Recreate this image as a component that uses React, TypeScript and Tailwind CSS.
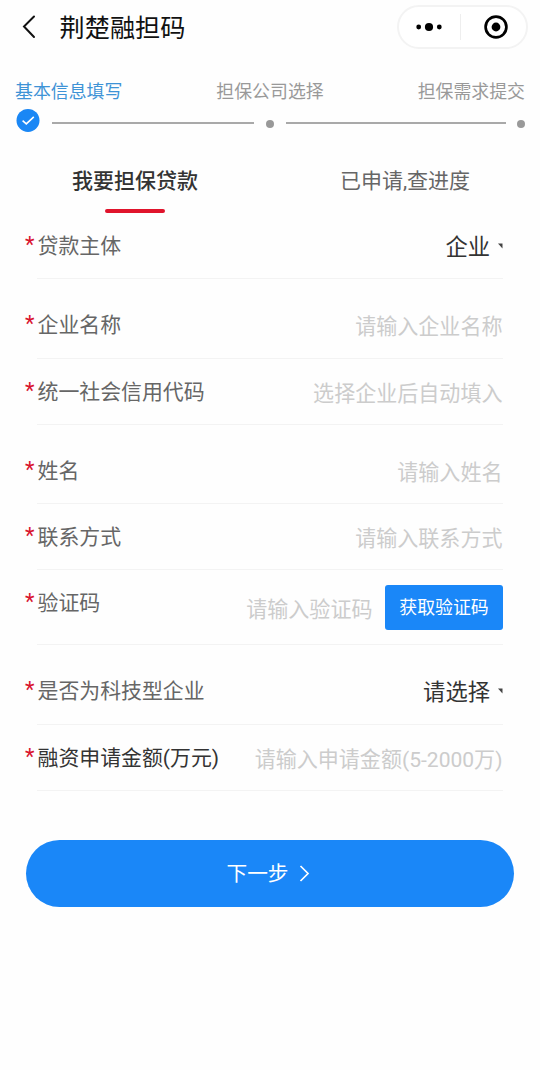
/**
 * 荆楚融担码 - 担保贷款申请表单
 */
import type { ReactNode } from "react";

interface FieldRowProps {
  label: string;
  dark?: boolean;
  className?: string;
  children: ReactNode;
}

/** 表单行 */
function FieldRow({ label, dark, className = "h-[66px]", children }: FieldRowProps) {
  return (
    <div className={`flex pl-[25px] pr-[37px] ${className}`}>
      <span className="w-[12px] shrink-0 pt-[16px] text-[22px] leading-[32px] text-[#d9152f]">*</span>
      <div className="flex flex-1 justify-between border-b border-[#f3f3f3]">
        <span
          className={`h-[64px] whitespace-nowrap pl-[0.5px] text-[20.9px] leading-[67px] ${dark ? "text-[#333333]" : "text-[#666666]"}`}
        >
          {label}
        </span>
        {children}
      </div>
    </div>
  );
}

/** 占位提示 */
function Hint({ text }: { text: string }) {
  return (
    <span className="h-[66px] whitespace-nowrap pr-[0.5px] text-[21.05px] leading-[69px] text-[#cccccc]">{text}</span>
  );
}

/** 下拉选择 */
function Picker({ text }: { text: string }) {
  return (
    <span className="flex h-[66px] items-center gap-[8px] text-[22.3px] leading-[68px] text-[#333333]">
      <span className="h-[66px]">{text}</span>
      <svg width="5" height="6" viewBox="0 0 5 6" className="block">
        <path d="M0 0.5H4.5V5.5Z" fill="#444444" />
      </svg>
    </span>
  );
}

export default function App() {
  return (
    <div className="h-[1070px] w-[540px] overflow-hidden bg-[#fefefe] font-['Roboto','Noto_Sans_CJK_SC',sans-serif]">
      {/* 顶部导航 */}
      <header className="flex h-[54px] items-center pl-[22px] pr-[12px]">
        <svg width="14" height="24" viewBox="0 0 14 24" fill="none" className="shrink-0">
          <path d="M12 1.5L2 11.5L12 22" stroke="#111111" strokeWidth="2" strokeLinecap="round" />
        </svg>
        <h1 className="ml-[23.5px] h-[54px] text-[25.2px] leading-[57px] text-[#111111]">荆楚融担码</h1>
        <div className="ml-auto flex h-[44px] w-[131px] items-center rounded-full border-2 border-[#f3f3f3] bg-white">
          <div className="flex flex-1 justify-center">
            <svg width="28" height="10" viewBox="0 0 28 10">
              <circle cx="3.7" cy="5" r="2.4" />
              <circle cx="14" cy="5" r="4.1" />
              <circle cx="24.3" cy="5" r="2.4" />
            </svg>
          </div>
          <div className="h-[26px] w-px bg-[#eeeeee]" />
          <div className="flex flex-1 justify-center pl-[5px]">
            <svg width="24" height="24" viewBox="0 0 24 24">
              <circle cx="12" cy="12" r="10.4" fill="none" stroke="#000000" strokeWidth="2.7" />
              <circle cx="12" cy="12" r="4.4" />
            </svg>
          </div>
        </div>
      </header>

      {/* 步骤条 */}
      <section className="pt-[24px]">
        <div className="flex h-[24px] justify-between px-[15px] text-[17.9px] leading-[27px] text-[#999999]">
          <span className="text-[#3e93d6]">基本信息填写</span>
          <span>担保公司选择</span>
          <span>担保需求提交</span>
        </div>
        <div className="mt-[6px] flex h-[25px] items-start pl-[16px] pr-[15px]">
          <svg width="24" height="25" viewBox="0 0 24 25" fill="none" className="shrink-0">
            <circle cx="12" cy="12.4" r="11.5" fill="#1a87f5" />
            <path d="M6.6 12.6L10.3 15.8L17.8 8.8" stroke="#ffffff" strokeWidth="1.6" />
          </svg>
          <div className="ml-[12px] mt-[14px] h-[2px] w-[202px] bg-[#a9a9a9]" />
          <div className="ml-[12px] mt-[12px] size-[8px] rounded-full bg-[#999999]" />
          <div className="ml-[12px] mt-[14px] h-[2px] w-[220px] bg-[#a9a9a9]" />
          <div className="ml-[11px] mt-[12px] size-[8px] rounded-full bg-[#999999]" />
        </div>
      </section>

      {/* 标签页 */}
      <nav className="mt-[27px] flex h-[53px] text-[21px] leading-[42px]">
        <div className="flex w-[270px] flex-col items-center text-[#333333]">
          <span className="font-medium">我要担保贷款</span>
          <div className="mt-[7px] h-[4px] w-[60px] shrink-0 rounded-full bg-[#e0142c]" />
        </div>
        <div className="w-[270px] text-center text-[#666666]">已申请,查进度</div>
      </nav>

      {/* 申请信息 */}
      <FieldRow label="贷款主体">
        <Picker text="企业" />
      </FieldRow>
      <div className="mt-[13px]">
        <FieldRow label="企业名称" className="h-[67px]">
          <Hint text="请输入企业名称" />
        </FieldRow>
        <FieldRow label="统一社会信用代码">
          <Hint text="选择企业后自动填入" />
        </FieldRow>
      </div>
      <div className="mt-[13px]">
        <FieldRow label="姓名">
          <Hint text="请输入姓名" />
        </FieldRow>
        <FieldRow label="联系方式">
          <Hint text="请输入联系方式" />
        </FieldRow>
        <FieldRow label="验证码" className="h-[75px]">
          <div className="flex h-[75px] items-center gap-[12px]">
            <Hint text="请输入验证码" />
            <button className="h-[45px] w-[118px] rounded-[3px] bg-[#1a87f8] pt-[2px] text-[17.9px] text-white">
              获取验证码
            </button>
          </div>
        </FieldRow>
      </div>
      <div className="mt-[13px]">
        <FieldRow label="是否为科技型企业" className="h-[67px]">
          <Picker text="请选择" />
        </FieldRow>
        <FieldRow label="融资申请金额(万元)" dark>
          <Hint text="请输入申请金额(5-2000万)" />
        </FieldRow>
      </div>

      {/* 下一步 */}
      <button className="ml-[26px] mt-[49px] flex h-[67px] w-[488px] items-center justify-center gap-[10px] rounded-full bg-[#1a87f8] pr-[4px] text-[20.7px] text-white">
        <span className="pt-[2px]">下一步</span>
        <svg width="11" height="18" viewBox="0 0 11 18" fill="none">
          <path d="M1.5 1L9 8.5L1.5 16" stroke="#ffffff" strokeWidth="1.7" />
        </svg>
      </button>
    </div>
  );
}
